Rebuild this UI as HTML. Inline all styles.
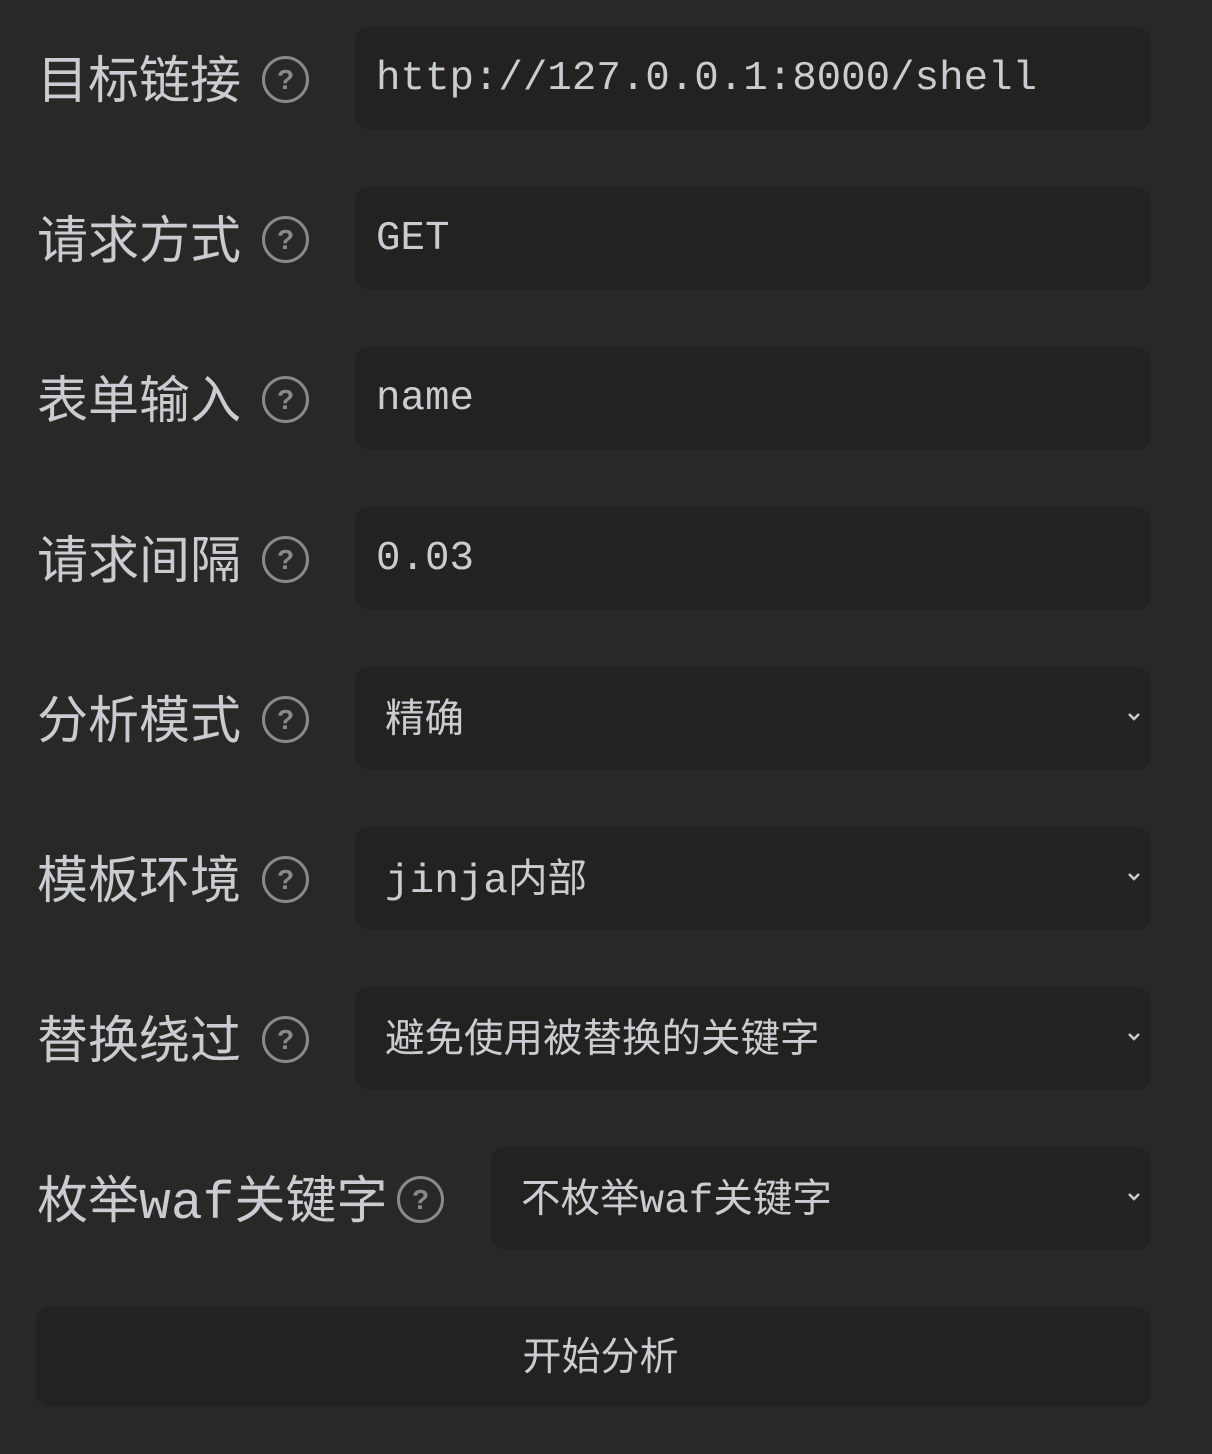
<!DOCTYPE html>
<html><head><meta charset="utf-8"><style>
body{margin:0;background:#2a2727;width:1212px;height:1454px;position:relative;overflow:hidden;font-family:"Liberation Sans","Noto Sans CJK SC",sans-serif;color:#c9ccd0}
.lbl{position:absolute;left:37px;font-size:51px;line-height:108px;height:104px;white-space:nowrap}
.q{position:absolute;width:47px;height:47px;border:3px solid #8a8a8a;border-radius:50%;box-sizing:border-box;color:#8a8a8a;font-size:28px;line-height:41px;text-align:center;font-weight:bold}
.in{position:absolute;left:355px;width:796px;height:103px;background:#242121;border-radius:14px;box-sizing:border-box;white-space:nowrap}
.mono{font-family:"Liberation Mono","DejaVu Sans Mono",monospace;font-size:40.8px;line-height:104px;padding-left:21px}
.sel{font-size:39.5px;line-height:104px;padding-left:30px}
.chev{position:absolute;right:10px;top:45px;width:14px;height:10px}
.m{font-family:"Liberation Mono",monospace}
</style></head><body>
<div class="lbl" style="top:27px">目标链接</div><div class="q" style="left:262px;top:56px">?</div>
<div class="in mono" style="top:27px">http://127.0.0.1:8000/shell</div>
<div class="lbl" style="top:187px">请求方式</div><div class="q" style="left:262px;top:216px">?</div>
<div class="in mono" style="top:187px">GET</div>
<div class="lbl" style="top:347px">表单输入</div><div class="q" style="left:262px;top:376px">?</div>
<div class="in mono" style="top:347px">name</div>
<div class="lbl" style="top:507px">请求间隔</div><div class="q" style="left:262px;top:536px">?</div>
<div class="in mono" style="top:507px">0.03</div>
<div class="lbl" style="top:667px">分析模式</div><div class="q" style="left:262px;top:696px">?</div>
<div class="in sel" style="top:667px">精确<svg class="chev" viewBox="0 0 14 10"><path d="M2 2l5 5 5-5" stroke="#c9ccd0" stroke-width="2.5" fill="none"/></svg></div>
<div class="lbl" style="top:827px">模板环境</div><div class="q" style="left:262px;top:856px">?</div>
<div class="in sel" style="top:827px"><span class="m" style="font-size:41px">jinja</span>内部<svg class="chev" viewBox="0 0 14 10"><path d="M2 2l5 5 5-5" stroke="#c9ccd0" stroke-width="2.5" fill="none"/></svg></div>
<div class="lbl" style="top:987px">替换绕过</div><div class="q" style="left:262px;top:1016px">?</div>
<div class="in sel" style="top:987px">避免使用被替换的关键字<svg class="chev" viewBox="0 0 14 10"><path d="M2 2l5 5 5-5" stroke="#c9ccd0" stroke-width="2.5" fill="none"/></svg></div>
<div class="lbl" style="top:1147px">枚举<span class="m" style="font-size:53px">waf</span>关键字</div><div class="q" style="left:397px;top:1176px">?</div>
<div class="in sel" style="top:1147px;left:491px;width:660px">不枚举<span class="m" style="font-size:41px">waf</span>关键字<svg class="chev" viewBox="0 0 14 10"><path d="M2 2l5 5 5-5" stroke="#c9ccd0" stroke-width="2.5" fill="none"/></svg></div>
<div class="in" style="top:1307px;left:36px;width:1115px;height:100px;text-align:center;font-size:39px;line-height:102px;padding-left:14px">开始分析</div>
</body></html>
